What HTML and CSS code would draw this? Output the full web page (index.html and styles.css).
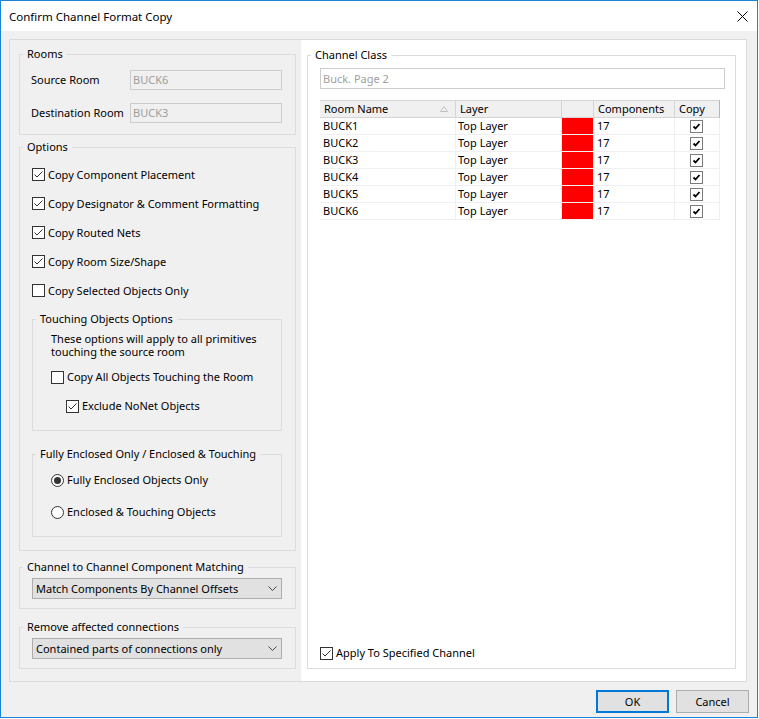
FILE: index.html
```html
<!DOCTYPE html>
<html>
<head>
<meta charset="utf-8">
<title>Confirm Channel Format Copy</title>
<link rel="stylesheet" href="styles.css">
</head>
<body>
<div class="window">
  <div class="titlebar">
    <span class="title">Confirm Channel Format Copy</span>
    <svg class="close" width="11" height="11" viewBox="0 0 11 11"><path d="M0.5 0.5L10.5 10.5M10.5 0.5L0.5 10.5" stroke="#000" stroke-width="1" fill="none"/></svg>
  </div>
  <div class="body">
    <div class="panel">
      <div class="left">
        <fieldset class="group rooms">
          <legend>Rooms</legend>
          <div class="gb rooms-body">
            <div class="field"><span class="label">Source Room</span><div class="input">BUCK6</div></div>
            <div class="field"><span class="label">Destination Room</span><div class="input">BUCK3</div></div>
          </div>
        </fieldset>

        <fieldset class="group options">
          <legend>Options</legend>
          <div class="gb options-body">
            <div class="checks">
              <div class="check"><span class="cb"><svg viewBox="0 0 11 11" width="11" height="11"><path d="M1.5 5.5L4 8L9.5 2.5" fill="none" stroke="#333" stroke-width="1"/></svg></span>Copy Component Placement</div>
              <div class="check"><span class="cb"><svg viewBox="0 0 11 11" width="11" height="11"><path d="M1.5 5.5L4 8L9.5 2.5" fill="none" stroke="#333" stroke-width="1"/></svg></span>Copy Designator &amp; Comment Formatting</div>
              <div class="check"><span class="cb"><svg viewBox="0 0 11 11" width="11" height="11"><path d="M1.5 5.5L4 8L9.5 2.5" fill="none" stroke="#333" stroke-width="1"/></svg></span>Copy Routed Nets</div>
              <div class="check"><span class="cb"><svg viewBox="0 0 11 11" width="11" height="11"><path d="M1.5 5.5L4 8L9.5 2.5" fill="none" stroke="#333" stroke-width="1"/></svg></span>Copy Room Size/Shape</div>
              <div class="check"><span class="cb"></span>Copy Selected Objects Only</div>
            </div>

            <fieldset class="group touching">
              <legend>Touching Objects Options</legend>
              <div class="gb touching-body">
                <div class="desc">These options will apply to all primitives<br>touching the source room</div>
                <div class="check first"><span class="cb"></span>Copy All Objects Touching the Room</div>
                <div class="check sub"><span class="cb"><svg viewBox="0 0 11 11" width="11" height="11"><path d="M1.5 5.5L4 8L9.5 2.5" fill="none" stroke="#333" stroke-width="1"/></svg></span>Exclude NoNet Objects</div>
              </div>
            </fieldset>

            <fieldset class="group enclosed">
              <legend>Fully Enclosed Only / Enclosed &amp; Touching</legend>
              <div class="gb enclosed-body">
                <div class="radio"><span class="rb on"></span>Fully Enclosed Objects Only</div>
                <div class="radio"><span class="rb"></span>Enclosed &amp; Touching Objects</div>
              </div>
            </fieldset>
          </div>
        </fieldset>

        <fieldset class="group matching">
          <legend>Channel to Channel Component Matching</legend>
          <div class="gb select-body">
            <div class="select"><span>Match Components By Channel Offsets</span><svg width="9" height="5" viewBox="0 0 9 5"><path d="M0.5 0.5L4.5 4.5L8.5 0.5" fill="none" stroke="#444" stroke-width="1"/></svg></div>
          </div>
        </fieldset>

        <fieldset class="group remove">
          <legend>Remove affected connections</legend>
          <div class="gb select-body">
            <div class="select"><span>Contained parts of connections only</span><svg width="9" height="5" viewBox="0 0 9 5"><path d="M0.5 0.5L4.5 4.5L8.5 0.5" fill="none" stroke="#444" stroke-width="1"/></svg></div>
          </div>
        </fieldset>
      </div>

      <div class="right">
        <fieldset class="group channel">
          <legend>Channel Class</legend>
          <div class="gb channel-body">
            <div class="input wide">Buck. Page 2</div>
            <div class="table">
              <div class="th name"><span>Room Name</span><svg width="8" height="6" viewBox="0 0 8 6"><path d="M0.5 5.5L4 0.5L7.5 5.5Z" fill="none" stroke="#c0c0c0" stroke-width="1"/></svg></div>
              <div class="th">Layer</div>
              <div class="th"></div>
              <div class="th">Components</div>
              <div class="th last">Copy</div>

              <div class="td">BUCK1</div><div class="td layer">Top Layer</div><div class="td color"></div><div class="td">17</div><div class="td copy"><span class="tcb"><svg viewBox="0 0 11 11" width="11" height="11"><path d="M2.5 5.5L4.5 7.5L8.5 3" fill="none" stroke="#000" stroke-width="1.8"/></svg></span></div>
              <div class="td">BUCK2</div><div class="td layer">Top Layer</div><div class="td color"></div><div class="td">17</div><div class="td copy"><span class="tcb"><svg viewBox="0 0 11 11" width="11" height="11"><path d="M2.5 5.5L4.5 7.5L8.5 3" fill="none" stroke="#000" stroke-width="1.8"/></svg></span></div>
              <div class="td">BUCK3</div><div class="td layer">Top Layer</div><div class="td color"></div><div class="td">17</div><div class="td copy"><span class="tcb"><svg viewBox="0 0 11 11" width="11" height="11"><path d="M2.5 5.5L4.5 7.5L8.5 3" fill="none" stroke="#000" stroke-width="1.8"/></svg></span></div>
              <div class="td">BUCK4</div><div class="td layer">Top Layer</div><div class="td color"></div><div class="td">17</div><div class="td copy"><span class="tcb"><svg viewBox="0 0 11 11" width="11" height="11"><path d="M2.5 5.5L4.5 7.5L8.5 3" fill="none" stroke="#000" stroke-width="1.8"/></svg></span></div>
              <div class="td">BUCK5</div><div class="td layer">Top Layer</div><div class="td color"></div><div class="td">17</div><div class="td copy"><span class="tcb"><svg viewBox="0 0 11 11" width="11" height="11"><path d="M2.5 5.5L4.5 7.5L8.5 3" fill="none" stroke="#000" stroke-width="1.8"/></svg></span></div>
              <div class="td">BUCK6</div><div class="td layer">Top Layer</div><div class="td color"></div><div class="td">17</div><div class="td copy"><span class="tcb"><svg viewBox="0 0 11 11" width="11" height="11"><path d="M2.5 5.5L4.5 7.5L8.5 3" fill="none" stroke="#000" stroke-width="1.8"/></svg></span></div>
            </div>
            <div class="check apply"><span class="cb"><svg viewBox="0 0 11 11" width="11" height="11"><path d="M1.5 5.5L4 8L9.5 2.5" fill="none" stroke="#333" stroke-width="1"/></svg></span>Apply To Specified Channel</div>
          </div>
        </fieldset>
      </div>
    </div>
    <div class="buttons">
      <button class="btn default">OK</button>
      <button class="btn">Cancel</button>
    </div>
  </div>
</div>
</body>
</html>
```

FILE: styles.css
```css
* { box-sizing: border-box; }
html, body { margin: 0; padding: 0; }
body {
  background: #fff;
  font-family: "Noto Sans", "Open Sans", "Liberation Sans", sans-serif;
  font-size: 11px;
  color: #000;
  width: 759px;
  height: 719px;
  overflow: hidden;
}
.window {
  width: 758px;
  height: 718px;
  border: 1px solid #1883d7;
  background: #f0f0f0;
  display: flex;
  flex-direction: column;
}
.titlebar {
  height: 30px;
  flex: none;
  background: #fff;
  display: flex;
  align-items: center;
  justify-content: space-between;
  padding: 0 9px 0 8px;
}
.title { font-size: 11.5px; }
.close { display: block; }

.body {
  flex: 1;
  padding: 8px 8px 0 8px;
  display: flex;
  flex-direction: column;
}
.panel {
  height: 643px;
  margin-right: 2px;
  border: 1px solid #dadada;
  display: grid;
  grid-template-columns: 291px 1fr;
}
.left {
  padding: 0 5px 0 9px;
  display: flex;
  flex-direction: column;
}
.right {
  background: #fff;
  padding: 7px 10px 12px 6px;
  display: flex;
  flex-direction: column;
}

/* group boxes */
.group {
  margin: 0;
  padding: 0;
  border: 1px solid #dcdcdc;
  min-width: 0;
}
.group > legend {
  margin-left: 3px;
  padding: 0 4px;
  height: 16px;
  line-height: 16px;
  white-space: nowrap;
}

.rooms { margin-top: 6px; }
.rooms-body {
  padding: 8px 13px 11px 11px;
  display: flex;
  flex-direction: column;
  gap: 13px;
}
.field { display: flex; align-items: center; height: 20px; }
.label { width: 99px; flex: none; line-height: 16px; }
.input {
  width: 152px;
  height: 20px;
  border: 1px solid #cccccc;
  color: #9d9d9d;
  padding-left: 2px;
  line-height: 18px;
}
.input.wide {
  width: 405px;
  height: 21px;
  line-height: 19px;
  color: #a0a0a0;
  background: #fff;
}

.options { margin-top: 4px; }
.options-body { padding: 12px 13px 13px 12px; }
.checks { display: flex; flex-direction: column; gap: 13px; }
.check {
  display: flex;
  align-items: center;
  height: 16px;
  line-height: 16px;
  white-space: nowrap;
}
.cb {
  width: 13px;
  height: 13px;
  flex: none;
  border: 1px solid #333;
  background: #fff;
  margin-right: 3px;
  display: flex;
}
.checks .cb { margin-bottom: 2px; }
.cb svg { display: block; }

.touching { margin-top: 12px; }
.touching-body { padding: 5px 0 16px 18px; }
.desc { line-height: 13px; }
.check.first { margin-top: 11px; }
.check.sub { margin-top: 13px; margin-left: 15px; }

.enclosed { margin-top: 15px; }
.enclosed-body {
  padding: 10px 0 16px 18px;
  display: flex;
  flex-direction: column;
  gap: 16px;
}
.radio {
  display: flex;
  align-items: center;
  height: 16px;
  line-height: 16px;
  white-space: nowrap;
}
.rb {
  width: 13px;
  height: 13px;
  flex: none;
  border: 1px solid #333;
  border-radius: 50%;
  background: #fff;
  margin-right: 3px;
  display: flex;
  align-items: center;
  justify-content: center;
}
.rb.on::after {
  content: "";
  width: 7px;
  height: 7px;
  border-radius: 50%;
  background: #333;
}

.matching { margin-top: 8px; }
.remove { margin-top: 10px; }
.select-body { padding: 3px 13px 9px 12px; }
.select {
  height: 21px;
  border: 1px solid #adadad;
  background: #e1e1e1;
  display: flex;
  align-items: center;
  justify-content: space-between;
  padding: 0 4px 0 3px;
}
.select svg { display: block; }

/* channel class */
.channel {
  flex: 1;
  display: flex;
  flex-direction: column;
}
.channel-body {
  flex: 1;
  padding: 5px 10px 7px 12px;
  display: flex;
  flex-direction: column;
}
.table {
  margin-top: 11px;
  width: 400px;
  display: grid;
  grid-template-columns: 136px 106px 32px 81px 45px;
}
.th {
  height: 18px;
  border-top: 1px solid #d5d5d5;
  border-bottom: 1px solid #d5d5d5;
  border-right: 1px solid #d5d5d5;
  background: #f0f0f0;
  padding-left: 4px;
  line-height: 16px;
  display: flex;
  align-items: center;
  white-space: nowrap;
}
.th.name { justify-content: space-between; padding-right: 7px; }
.th.name svg { display: block; }
.th.last { border-right-color: #b5b5b5; }
.td {
  height: 17px;
  border-bottom: 1px solid #f0f0f0;
  border-right: 1px solid #f0f0f0;
  padding-left: 3px;
  line-height: 16px;
  display: flex;
  align-items: center;
  white-space: nowrap;
}
.td.layer { padding-left: 2px; }
.td.color { background: #ff0000; }
.td.copy { justify-content: center; padding: 0 1px 0 0; }
.tcb {
  width: 13px;
  height: 13px;
  border: 1px solid #7a7a7a;
  background: #fff;
  display: flex;
}
.tcb svg { display: block; }

.check.apply { margin-top: auto; }

/* buttons */
.buttons {
  margin-top: 8px;
  display: flex;
  justify-content: flex-end;
  gap: 7px;
}
.btn {
  width: 73px;
  height: 23px;
  border: 1px solid #adadad;
  background: #e1e1e1;
  font-family: inherit;
  font-size: 11px;
  color: #000;
  padding: 0;
  margin: 0;
}
.btn.default { border: 2px solid #0078d7; }
```
